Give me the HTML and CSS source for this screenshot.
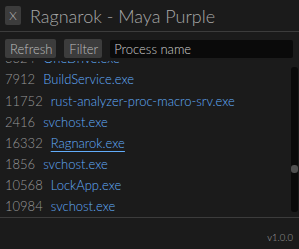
FILE: index.html
```html
<!DOCTYPE html>
<html>
<head>
<meta charset="utf-8">
<link rel="stylesheet" href="styles.css">
</head>
<body>
<div class="app">
  <div class="titlebar">
    <div class="close">X</div>
    <div class="title">Ragnarok - Maya Purple</div>
  </div>
  <div class="toolbar">
    <div class="btn">Refresh</div>
    <div class="btn">Filter</div>
    <div class="input">Process name</div>
  </div>
  <div class="listwrap">
    <div class="list">
      <div class="row first"><span class="pid">3324</span><span class="name">OneDrive.exe</span></div>
      <div class="row"><span class="pid">7912</span><span class="name">BuildService.exe</span></div>
      <div class="row"><span class="pid">11752</span><span class="name">rust-analyzer-proc-macro-srv.exe</span></div>
      <div class="row"><span class="pid">2416</span><span class="name">svchost.exe</span></div>
      <div class="row"><span class="pid">16332</span><span class="name hover">Ragnarok.exe</span></div>
      <div class="row"><span class="pid">1856</span><span class="name">svchost.exe</span></div>
      <div class="row"><span class="pid">10568</span><span class="name">LockApp.exe</span></div>
      <div class="row"><span class="pid">10984</span><span class="name">svchost.exe</span></div>
    </div>
    <div class="scrollbar"><div class="thumb"></div></div>
  </div>
  <div class="footer"><span class="version">v1.0.0</span></div>
</div>
</body>
</html>
```
FILE: styles.css
```css
html, body {
  margin: 0;
  padding: 0;
  background: #1b1b1b;
}
body {
  font-family: Lato, "Noto Sans", sans-serif;
  font-weight: 300;
  width: 299px;
  height: 249px;
  overflow: hidden;
}
.app {
  display: flex;
  flex-direction: column;
  height: 249px;
}
.titlebar {
  height: 31px;
  display: flex;
  align-items: center;
  padding-left: 5px;
  gap: 9px;
  border-bottom: 1px solid #3c3c3c;
  box-sizing: content-box;
}
.close {
  width: 16px;
  height: 19px;
  background: #3c3c3c;
  border-radius: 2px;
  color: #bcbcbc;
  font-size: 12px;
  display: flex;
  align-items: center;
  justify-content: center;
}
.title {
  font-size: 18px;
  color: #a8a8a8;
  white-space: nowrap;
}
.toolbar {
  display: flex;
  gap: 8px;
  padding: 7px 6px 0 5px;
  height: 19px;
  align-items: stretch;
}
.btn {
  background: #3c3c3c;
  border-radius: 2px;
  color: #bcbcbc;
  font-size: 13px;
  padding: 0 4px 0 5px;
  display: flex;
  align-items: center;
}
.input {
  flex: 1;
  background: #0a0a0a;
  border-radius: 2px;
  color: #d0d0d0;
  font-size: 13px;
  padding-left: 4px;
  margin-top: 1px;
  display: flex;
  align-items: center;
}
.listwrap {
  position: relative;
  margin-top: 3px;
  height: 151px;
}
.list {
  height: 151px;
  overflow: hidden;
}
.row {
  height: 21.17px;
  line-height: 21.17px;
  font-size: 13px;
  padding-left: 5px;
  display: flex;
  gap: 8px;
  white-space: nowrap;
}
.row.first {
  margin-top: -12.8px;
}
.pid {
  color: #989898;
}
.name {
  color: #62acfa;
}
.name.hover {
  text-decoration: underline;
  text-underline-offset: 3px;
  text-decoration-thickness: 1px;
}
.scrollbar {
  position: absolute;
  left: 291px;
  top: 6px;
  width: 7px;
  height: 145px;
  background: #0a0a0a;
  border-radius: 3px;
}
.thumb {
  position: absolute;
  left: 0;
  top: 98px;
  width: 7px;
  height: 8px;
  background: #505050;
  border-radius: 3px;
}
.footer {
  margin-top: 5px;
  border-top: 1px solid #3c3c3c;
  flex: 1;
  display: flex;
  justify-content: flex-end;
  padding: 14px 6px 0 0;
}
.version {
  font-size: 9.5px;
  color: #a0a0a0;
}
```
